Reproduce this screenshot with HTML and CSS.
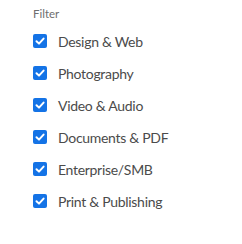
FILE: index.html
```html
<!DOCTYPE html>
<html>
<head>
<meta charset="utf-8">
<link rel="stylesheet" href="styles.css">
</head>
<body>
<div class="filter">
  <div class="title">Filter</div>
  <ul class="list">
    <li class="item"><span class="box"><svg viewBox="0 0 14 14" width="14" height="14"><path d="M3.5 7.2 L6 9.6 L10.6 4.6" fill="none" stroke="#fff" stroke-width="2" stroke-linecap="round" stroke-linejoin="round"/></svg></span><span class="label">Design &amp; Web</span></li>
    <li class="item"><span class="box"><svg viewBox="0 0 14 14" width="14" height="14"><path d="M3.5 7.2 L6 9.6 L10.6 4.6" fill="none" stroke="#fff" stroke-width="2" stroke-linecap="round" stroke-linejoin="round"/></svg></span><span class="label">Photography</span></li>
    <li class="item"><span class="box"><svg viewBox="0 0 14 14" width="14" height="14"><path d="M3.5 7.2 L6 9.6 L10.6 4.6" fill="none" stroke="#fff" stroke-width="2" stroke-linecap="round" stroke-linejoin="round"/></svg></span><span class="label">Video &amp; Audio</span></li>
    <li class="item"><span class="box"><svg viewBox="0 0 14 14" width="14" height="14"><path d="M3.5 7.2 L6 9.6 L10.6 4.6" fill="none" stroke="#fff" stroke-width="2" stroke-linecap="round" stroke-linejoin="round"/></svg></span><span class="label">Documents &amp; PDF</span></li>
    <li class="item"><span class="box"><svg viewBox="0 0 14 14" width="14" height="14"><path d="M3.5 7.2 L6 9.6 L10.6 4.6" fill="none" stroke="#fff" stroke-width="2" stroke-linecap="round" stroke-linejoin="round"/></svg></span><span class="label">Enterprise/SMB</span></li>
    <li class="item"><span class="box"><svg viewBox="0 0 14 14" width="14" height="14"><path d="M3.5 7.2 L6 9.6 L10.6 4.6" fill="none" stroke="#fff" stroke-width="2" stroke-linecap="round" stroke-linejoin="round"/></svg></span><span class="label">Print &amp; Publishing</span></li>
  </ul>
</div>
</body>
</html>
```
FILE: styles.css
```css
html, body {
  margin: 0;
  padding: 0;
  background: #fff;
}
.filter {
  padding: 6px 0 0 33px;
  font-family: Lato, sans-serif;
}
.title {
  font-size: 11.5px;
  line-height: 16px;
  color: #6e6e6e;
}
.list {
  list-style: none;
  margin: 0;
  padding: 0;
  margin-top: 3px;
}
.item {
  display: flex;
  align-items: center;
  height: 32px;
}
.box {
  width: 14px;
  height: 14px;
  border-radius: 2px;
  background: #1473e6;
  display: flex;
  flex: none;
}
.label {
  margin-left: 11px;
  font-size: 14px;
  letter-spacing: -0.3px;
  color: #4b4b4b;
}
```
